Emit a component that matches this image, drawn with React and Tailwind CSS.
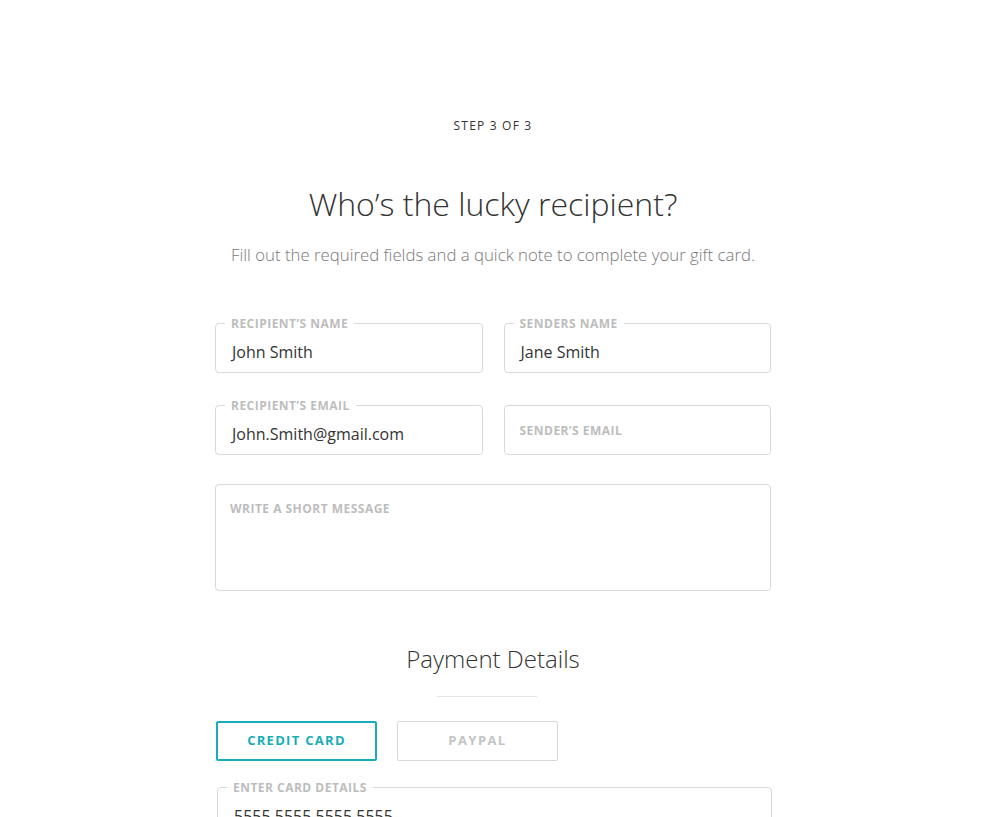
const font = { fontFamily: '"Open Sans", "Liberation Sans", sans-serif' }

function Field({ label, value, placeholder, className = '' }) {
  return (
    <div className={`relative h-[50px] rounded border border-[#d9d9d9] bg-white ${className}`}>
      {label && (
        <span className="absolute -top-[7px] left-[9px] bg-white px-[6px] text-[12px] font-bold leading-[14px] tracking-[0.04em] text-[#bdbdbd]">
          {label}
        </span>
      )}
      {value && (
        <div className="pl-4 pt-[16px] text-[16px] leading-6 text-[#333]">{value}</div>
      )}
      {placeholder && (
        <div className="pl-[15px] pt-[18px] text-[12px] font-bold leading-[14px] tracking-[0.04em] text-[#bdbdbd]">
          {placeholder}
        </div>
      )}
    </div>
  )
}

export default function App() {
  return (
    <div className="min-h-screen bg-white overflow-hidden pr-[2px]" style={font}>
      <div className="mx-auto w-[556px] pt-[118px] text-center">
        <p className="text-[12px] leading-4 tracking-[0.1em] text-[#333]">STEP 3 OF 3</p>
        <h1 className="mt-[50px] text-[32px] font-light leading-[40px] text-[#333]">Who’s the lucky recipient?</h1>
        <p className="mt-[19px] whitespace-nowrap text-[16.8px] font-light leading-6 text-[#777]">
          Fill out the required fields and a quick note to complete your gift card.
        </p>
      </div>

      <div className="mx-auto w-[556px] text-left">
        <div className="mt-[56px] grid grid-cols-2 gap-x-[21px] gap-y-[32px]">
          <Field label="RECIPIENT’S NAME" value="John Smith" />
          <Field label="SENDERS NAME" value="Jane Smith" />
          <Field label="RECIPIENT’S EMAIL" value="John.Smith@gmail.com" />
          <Field placeholder="SENDER’S EMAIL" />
        </div>

        <div className="mt-[29px] h-[107px] rounded border border-[#d9d9d9] pl-[14px] pt-[17px] text-[12px] font-bold leading-[14px] tracking-[0.04em] text-[#bdbdbd]">
          WRITE A SHORT MESSAGE
        </div>

        <h2 className="mt-[52px] text-center text-[24px] font-light leading-8 text-[#333]">Payment Details</h2>
        <div className="ml-[222px] mt-[21px] h-px w-[100px] bg-[#e6e6e6]" />

        <div className="mt-[24px] flex gap-[20px] pl-px">
          <button className="h-10 w-[161px] rounded-[2px] border-2 border-[#17adb7] text-[13px] font-bold tracking-[0.1em] text-[#17adb7]">
            CREDIT CARD
          </button>
          <button className="h-10 w-[161px] rounded-[2px] border border-[#d9d9d9] text-[13px] font-bold tracking-[0.11em] text-[#c4c4c4]">
            PAYPAL
          </button>
        </div>

        <Field label="ENTER CARD DETAILS" value="5555 5555 5555 5555" className="mt-[26px] ml-[2px] mr-[-1px]" />
      </div>
    </div>
  )
}
